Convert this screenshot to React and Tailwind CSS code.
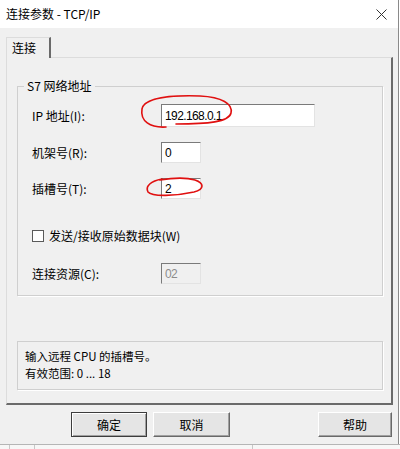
import React from "react";

const font = { fontFamily: '"Noto Sans CJK SC", "Noto Sans", sans-serif' };
const mono = { fontFamily: '"Liberation Sans", Arial, sans-serif' };

function Field({ label, value, wide, disabled, className = "" }) {
  return (
    <div className={`flex items-center ${className}`}>
      <div className="w-[129px] text-[12px] text-black">{label}</div>
      <div
        style={mono}
        className={`flex items-center border border-t-[#7a7a7a] border-l-[#7a7a7a] border-r-[#e3e3e3] border-b-[#e3e3e3] px-[3px] text-[12px] tracking-[-0.6px] ${
          wide ? "w-[154px] h-[23px]" : "w-[40px] h-[21px]"
        } ${disabled ? "bg-[#f0f0f0] text-[#8c8c8c]" : "bg-white text-black"}`}
      >
        {value}
      </div>
    </div>
  );
}

function Btn({ children, primary, className = "" }) {
  return (
    <div
      className={`h-[25px] flex items-center justify-center text-[12px] text-black bg-[#e5e5e5] border ${
        primary
          ? "border-[#3c3c3c] shadow-[inset_1px_1px_0_#fff,inset_-1px_-1px_0_#a0a0a0]"
          : "border-t-white border-l-white border-r-[#696969] border-b-[#696969] shadow-[inset_-1px_-1px_0_#a0a0a0]"
      } ${className}`}
    >
      {children}
    </div>
  );
}

export default function App() {
  return (
    <div className="relative w-[400px] h-[449px] overflow-hidden bg-white" style={font}>
      <div className="w-[399px] h-[444px] flex flex-col border-r border-[#8a8a8a]">
        {/* title bar */}
        <div className="h-[28px] bg-white flex items-center justify-between pl-[6px] pr-[11px]">
          <span className="text-[12px] text-black">连接参数 - TCP/IP</span>
          <svg width="11" height="11" viewBox="0 0 11 11" className="text-[#333]">
            <path d="M0.5 0.5 L10.5 10.5 M10.5 0.5 L0.5 10.5" stroke="currentColor" strokeWidth="1" fill="none" />
          </svg>
        </div>

        <div className="flex-1 bg-[#f0f0f0] pl-[6px] pt-[9px] flex flex-col">
          {/* tab */}
          <div className="w-[45px] h-[21px] -mb-px relative z-10 bg-[#f0f0f0] border border-b-0 border-t-[#dcdcdc] border-l-[#dcdcdc] border-r-[#6a6a6a] border-r-2 flex items-center pl-[5px] text-[12px] text-black">
            连接
          </div>
          {/* panel */}
          <div className="w-[387px] h-[348px] border border-t-[#dcdcdc] border-l-[#dcdcdc] border-r-2 border-r-[#6a6a6a] border-b-2 border-b-[#6a6a6a] pl-[10px] pt-[20px] flex flex-col">
            <fieldset className="w-[366px] h-[218px] border border-[#cfcfcf] shadow-[1px_1px_0_#fff] pl-[14px]">
              <legend className="ml-[-8px] px-[3px] text-[12px] text-black leading-[16px]">S7 网络地址</legend>
              <Field label="IP 地址(I):" value="192.168.0.1" wide className="mt-[10px]" />
              <Field label="机架号(R):" value="0" className="mt-[15px]" />
              <Field label="插槽号(T):" value="2" className="mt-[15px]" />
              <div className="mt-[28px] flex items-center gap-[5px]">
                <div className="w-[12px] h-[12px] bg-white border border-[#5a5a5a]" />
                <span className="text-[12px] text-black">发送/接收原始数据块(W)</span>
              </div>
              <Field label="连接资源(C):" value="02" disabled className="mt-[18px]" />
            </fieldset>
            <div className="mt-[45px] w-[366px] h-[49px] border border-[#cfcfcf] shadow-[1px_1px_0_#fff] pl-[7px] pt-[6px] text-[11.5px] leading-[17px] text-black">
              <div>输入远程 CPU 的插槽号。</div>
              <div>有效范围: 0 ... 18</div>
            </div>
          </div>
          {/* buttons */}
          <div className="flex mt-[7px] pl-[65px]">
            <Btn primary className="w-[76px]">确定</Btn>
            <Btn className="w-[77px] ml-[6px]">取消</Btn>
            <Btn className="w-[74px] ml-[88px]">帮助</Btn>
          </div>
        </div>
      </div>
      {/* underlying window strip */}
      <div className="h-[5px] border-t border-[#b5b5b5] bg-[#f7f7f7] flex">
        <div className="w-[10px] border-r border-[#c8c8c8]" />
        <div className="w-[25px] border-r border-[#c8c8c8]" />
        <div className="w-[218px] border-r border-[#c8c8c8]" />
      </div>

      {/* red annotation marks */}
      <svg className="absolute inset-0 pointer-events-none" width="400" height="449" viewBox="0 0 400 449">
        <path
          d="M166 127 C150 128 140 121 142 109 C144 98 170 95 200 96 C222 97 233 104 231 113 C229 122 208 124 176 124"
          stroke="#e01010"
          strokeWidth="1.6"
          fill="none"
          strokeLinecap="round"
        />
        <path
          d="M162 179 C151 181 145 186 148 192 C152 197 176 196 194 192 C205 189 204 183 195 180 C185 177 172 178 160 180"
          stroke="#e01010"
          strokeWidth="1.6"
          fill="none"
          strokeLinecap="round"
        />
      </svg>
    </div>
  );
}
